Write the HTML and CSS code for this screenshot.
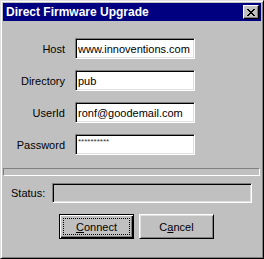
FILE: index.html
```html
<!DOCTYPE html>
<html>
<head>
    <meta charset="utf-8">
    <title>Direct Firmware Upgrade</title>
    <link rel="stylesheet" href="styles.css">
</head>
<body>
    <div class="window">
        <div class="title-bar">
            <span class="title-text">Direct Firmware Upgrade</span>
            <button class="close-btn" aria-label="Close">
                <svg width="8" height="7" viewBox="0 0 8 7">
                    <path d="M0 0h2v1h1v1h2v-1h1v-1h2v1h-1v1h-1v1h-1v1h1v1h1v1h1v1h-2v-1h-1v-1h-2v1h-1v1h-2v-1h1v-1h1v-1h1v-1h-1v-1h-1v-1h-1z" fill="#000"/>
                </svg>
            </button>
        </div>

        <div class="form">
            <label class="form-label">Host</label>
            <input class="field" type="text" value="www.innoventions.com">
            <label class="form-label">Directory</label>
            <input class="field" type="text" value="pub">
            <label class="form-label">UserId</label>
            <input class="field" type="text" value="ronf@goodemail.com">
            <label class="form-label">Password</label>
            <input class="field field-password" type="text" value="**********">
        </div>

        <div class="progress"></div>

        <div class="status-row">
            <span class="status-label">Status:</span>
            <div class="status-field"></div>
        </div>

        <div class="buttons">
            <button class="btn btn-default"><span class="btn-focus"><u>C</u>onnect</span></button>
            <button class="btn"><span class="btn-focus">C<u>a</u>ncel</span></button>
        </div>
    </div>
</body>
</html>
```

FILE: styles.css
```css
* {
    margin: 0;
    padding: 0;
    box-sizing: border-box;
}
body {
    font-family: "Liberation Sans", Arial, sans-serif;
    font-size: 11px;
    background-color: #c0c0c0;
    color: #000;
}
.window {
    width: 264px;
    height: 259px;
    padding: 2px;
    background-color: #c0c0c0;
    border: 1px solid;
    border-color: #dfdfdf #000 #000 #dfdfdf;
    box-shadow: inset 1px 1px #fff, inset -1px -1px #808080;
}
.title-bar {
    height: 18px;
    display: flex;
    align-items: center;
    justify-content: space-between;
    padding: 0 2px 0 2px;
    background-color: #000080;
}
.title-text {
    color: #fff;
    font-weight: bold;
    font-size: 12px;
    padding-left: 1px;
}
.close-btn {
    width: 16px;
    height: 14px;
    display: flex;
    align-items: center;
    justify-content: center;
    background-color: #c0c0c0;
    border: 1px solid;
    border-color: #fff #000 #000 #fff;
    box-shadow: inset -1px -1px #808080;
}
.form {
    display: grid;
    grid-template-columns: 62px 120px;
    column-gap: 10px;
    row-gap: 11px;
    align-items: center;
    padding-top: 17px;
}
.form-label {
    text-align: right;
}
.field {
    height: 21px;
    width: 120px;
    padding: 0 2px;
    font-family: "Liberation Sans", Arial, sans-serif;
    font-size: 11px;
    color: #000;
    background-color: #fff;
    border: 1px solid;
    border-color: #808080 #fff #fff #808080;
    box-shadow: inset 1px 1px #000, inset -1px -1px #dfdfdf;
    outline: none;
}
.field-password {
    font-size: 8px;
    color: #333;
    padding-bottom: 6px;
}
.progress {
    height: 8px;
    width: 257px;
    margin-top: 13px;
    border: 1px solid;
    border-color: #808080 #fff #fff #808080;
}
.status-row {
    display: flex;
    align-items: center;
    margin-top: 7px;
    padding-left: 8px;
}
.status-label {
    width: 41px;
}
.status-field {
    width: 200px;
    height: 20px;
    border: 1px solid;
    border-color: #808080 #fff #fff #808080;
    box-shadow: inset 1px 1px #000, inset -1px -1px #dfdfdf;
}
.buttons {
    display: flex;
    justify-content: center;
    gap: 5px;
    margin-top: 11px;
    padding-left: 9px;
}
.btn {
    width: 75px;
    height: 25px;
    padding: 3px;
    font-family: "Liberation Sans", Arial, sans-serif;
    font-size: 11px;
    color: #000;
    background-color: #c0c0c0;
    border: 1px solid;
    border-color: #fff #000 #000 #fff;
    box-shadow: inset 1px 1px #dfdfdf, inset -1px -1px #808080;
}
.btn-default {
    border: 1px solid #000;
    box-shadow: inset 1px 1px #fff, inset -1px -1px #000, inset -2px -2px #808080;
}
.btn-focus {
    display: flex;
    align-items: center;
    justify-content: center;
    height: 100%;
    border: 1px dotted transparent;
}
.btn-default .btn-focus {
    border-color: #000;
}
.btn u {
    text-underline-offset: 1px;
}
```
